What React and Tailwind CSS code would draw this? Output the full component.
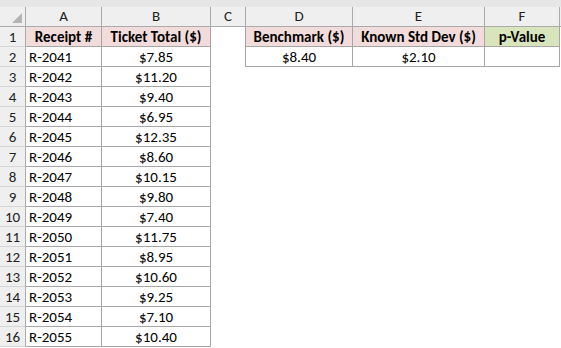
import React from 'react'

const receipts = [
  ['R-2041', '$7.85'],
  ['R-2042', '$11.20'],
  ['R-2043', '$9.40'],
  ['R-2044', '$6.95'],
  ['R-2045', '$12.35'],
  ['R-2046', '$8.60'],
  ['R-2047', '$10.15'],
  ['R-2048', '$9.80'],
  ['R-2049', '$7.40'],
  ['R-2050', '$11.75'],
  ['R-2051', '$8.95'],
  ['R-2052', '$10.60'],
  ['R-2053', '$9.25'],
  ['R-2054', '$7.10'],
  ['R-2055', '$10.40'],
]

const cols = ['A', 'B', 'C', 'D', 'E', 'F']

const Cell = ({ className = '', children }) => (
  <div className={`h-[20px] flex items-center pt-[1px] overflow-hidden whitespace-nowrap ${className}`}>
    {children}
  </div>
)

const RowHead = ({ n }) => (
  <Cell className="justify-center bg-[#efefef] border-r border-b border-r-[#ababab] border-b-[#d6d6d6] text-[#222]">
    {n}
  </Cell>
)

export default function App() {
  return (
    <div className="w-[561px] h-[348px] overflow-hidden bg-white text-[15px] text-black font-['Carlito','Lato',sans-serif]">
      {/* top strip */}
      <div className="h-[7px] bg-[#e6e6e6]" />

      <div className="grid grid-cols-[26px_76px_109px_35px_107px_132px_75px_1fr]">
        {/* column headers */}
        <div className="relative h-[20px] bg-[#efefef] border-r border-b border-[#ababab]">
          <div className="absolute right-[3px] bottom-[3px] w-0 h-0 border-l-[10px] border-l-transparent border-b-[10px] border-b-[#b4b4b4]" />
        </div>
        {cols.map((c) => (
          <div key={c} className="h-[20px] flex items-center justify-center bg-[#efefef] border-r border-b border-[#ababab] text-[#222]">
            {c}
          </div>
        ))}
        <div className="h-[20px] bg-[#efefef] border-b border-[#ababab]" />

        {/* row 1 */}
        <RowHead n={1} />
        <Cell className="justify-center font-bold bg-[#f2dcdb] border-r border-b border-[#a6a6a6]">Receipt #</Cell>
        <Cell className="justify-center font-bold bg-[#f2dcdb] border-r border-b border-[#a6a6a6]">Ticket Total ($)</Cell>
        <Cell className="border-r border-[#a6a6a6]" />
        <Cell className="justify-center font-bold bg-[#f2dcdb] border-r border-b border-[#a6a6a6]">Benchmark ($)</Cell>
        <Cell className="justify-center font-bold bg-[#f2dcdb] border-r border-b border-[#a6a6a6]">Known Std Dev ($)</Cell>
        <Cell className="justify-center font-bold bg-[#d8e4bc] border-r border-b border-[#a6a6a6]">p-Value</Cell>
        <Cell />

        {/* data rows */}
        {receipts.map(([id, total], i) => (
          <React.Fragment key={id}>
            <RowHead n={i + 2} />
            <Cell className="pl-[3px] border-r border-b border-[#a6a6a6]">{id}</Cell>
            <Cell className="justify-center border-r border-b border-[#a6a6a6]">{total}</Cell>
            {i === 0 ? (
              <>
                <Cell className="border-r border-[#a6a6a6]" />
                <Cell className="justify-center border-r border-b border-[#a6a6a6]">$8.40</Cell>
                <Cell className="justify-center border-r border-b border-[#a6a6a6]">$2.10</Cell>
                <Cell className="border-r border-b border-[#a6a6a6]" />
                <Cell />
              </>
            ) : (
              <>
                <Cell />
                <Cell />
                <Cell />
                <Cell />
                <Cell />
              </>
            )}
          </React.Fragment>
        ))}
      </div>
    </div>
  )
}
